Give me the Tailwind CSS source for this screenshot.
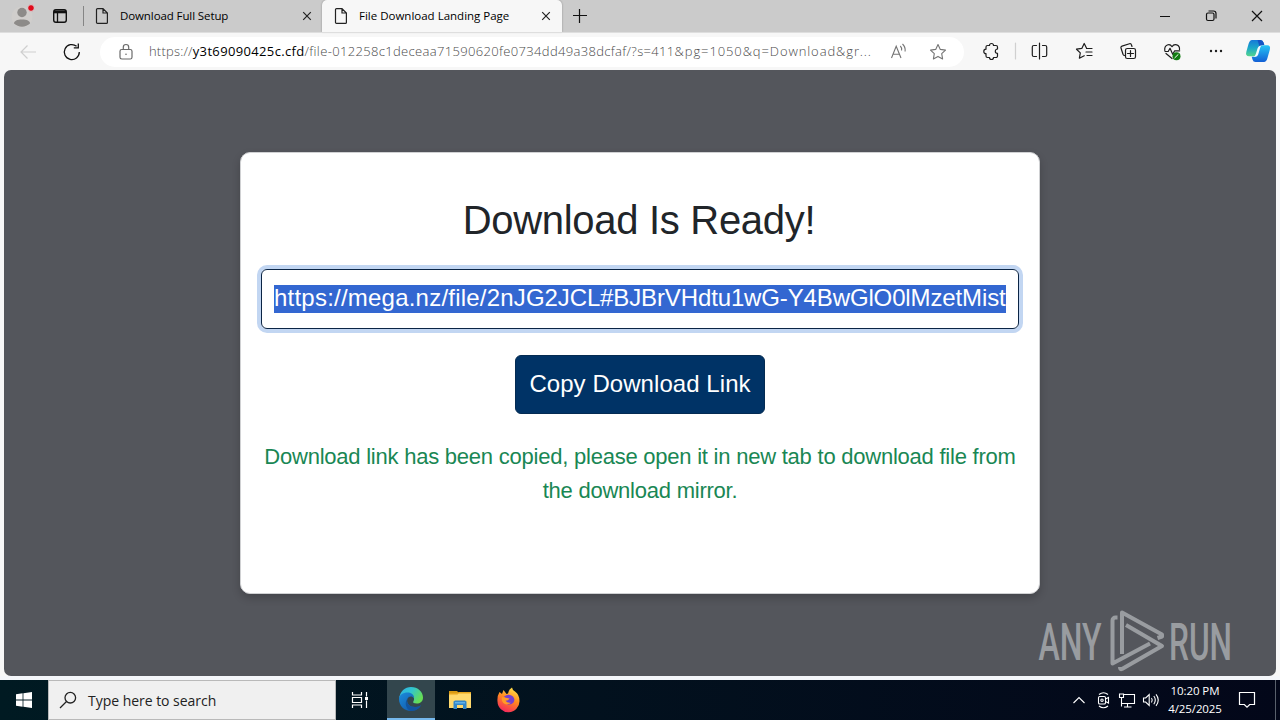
<!DOCTYPE html>
<html lang="en">
<head>
<meta charset="utf-8">
<title>File Download Landing Page</title>
<script src="https://cdn.jsdelivr.net/npm/@tailwindcss/browser@4"></script>
</head>
<body class="w-[1280px] h-[720px] overflow-hidden flex flex-col bg-[#f7f7f7] font-['Open_Sans','Noto_Sans',sans-serif] text-black whitespace-nowrap">

<!-- Tab strip -->
<header class="h-8 shrink-0 flex bg-[#cbcbcb]">
  <div class="w-[83px] h-8 flex items-center">
    <svg class="w-[83px] h-8" viewBox="0 0 83 32" fill="none">
      <circle cx="22" cy="17" r="10.500" fill="#d0cecc"/>
      <circle cx="22" cy="12.500" r="4.700" fill="#8d8b89"/>
      <path d="M14 23.500c0-2.500 3-4 8-4s8 1.500 8 4c-2 2-5 3.200-8 3.200s-6-1.200-8-3.200z" fill="#8d8b89"/>
      <circle cx="31" cy="8" r="3.400" fill="#e00b1c" stroke="#d9d9d9"/>
      <rect x="53.700" y="9.700" width="12.600" height="12.600" rx="2.200" stroke="#111" stroke-width="1.400"/>
      <path d="M54 10.500h12v2.800H54z" fill="#111"/><path d="M57.500 13v9" stroke="#111" stroke-width="1.300"/>
    </svg>
  </div>
  <div class="w-[239px] h-8 flex items-center">
    <div class="w-px h-5 bg-[#858585]"></div>
    <svg class="w-[14px] h-[18px] ml-[11px]" viewBox="0 0 14 18" fill="none" stroke="#222" stroke-width="1.200"><path d="M2.500 1.600H8L12.400 6v9.400a1 1 0 0 1-1 1H2.500a1 1 0 0 1-1-1V2.600a1 1 0 0 1 1-1zM8 1.600V6h4.400"/></svg>
    <span class="ml-[11px] w-[182px] text-[11.500px] tracking-[-0.100px]">Download Full Setup</span>
    <svg class="w-[10px] h-[10px]" viewBox="0 0 10 10" stroke="#222" stroke-width="1.200"><path d="M1.200 1.200l7.600 7.600M8.800 1.200L1.200 8.800"/></svg>
  </div>
  <div class="w-[240px] h-8 flex items-center bg-[#f7f7f7] rounded-t-[5px] shadow-[0_0_2px_rgba(0,0,0,0.35)]">
    <svg class="w-[14px] h-[18px] ml-[12px]" viewBox="0 0 14 18" fill="none" stroke="#222" stroke-width="1.200"><path d="M2.500 1.600H8L12.400 6v9.400a1 1 0 0 1-1 1H2.500a1 1 0 0 1-1-1V2.600a1 1 0 0 1 1-1zM8 1.600V6h4.400"/></svg>
    <span class="ml-[11px] w-[182px] text-[11.500px] tracking-[0px]">File Download Landing Page</span>
    <svg class="w-[10px] h-[10px]" viewBox="0 0 10 10" stroke="#222" stroke-width="1.200"><path d="M1.200 1.200l7.600 7.600M8.800 1.200L1.200 8.800"/></svg>
  </div>
  <svg class="w-[14px] h-[14px] mt-[9px] ml-[11px]" viewBox="0 0 14 14" stroke="#111" stroke-width="1.200"><path d="M0 6.500h14M6.500 0v14"/></svg>
  <svg class="ml-auto w-[140px] h-8" viewBox="1140 0 140 32" fill="none" stroke="#111" stroke-width="1.200">
    <path d="M1160 16.500h10M1252 11l10 10M1262 11l-10 10"/>
    <rect x="1206.500" y="13" width="7.500" height="7.500" rx="1.500"/><path d="M1208.500 11h5q2.500 0 2.500 2.500v5"/>
  </svg>
</header>

<!-- Toolbar -->
<div class="h-[38px] shrink-0 flex items-center border-t border-[#dedede]">
  <svg class="w-[100px] h-[36px]" viewBox="0 33 100 36" fill="none">
    <path d="M36 51H21M27.500 44.500L21 51l6.500 6.500" stroke="#cfcfcf" stroke-width="1.200"/>
    <path d="M79.300 51a7.500 7.500 0 1 1-2.700-5.700" stroke="#111" stroke-width="1.300"/><path d="M78.300 42.500v4.300h-4.500" stroke="#111" stroke-width="1.300"/>
  </svg>
  <div class="w-[864px] h-[30px] rounded-full bg-white flex items-center">
    <svg class="w-[14px] h-[18px] ml-[19px]" viewBox="0 0 14 18" fill="none" stroke="#6a6a6a" stroke-width="1.200"><rect x="1" y="6.500" width="12" height="9.500" rx="1.800"/><path d="M4.300 6.500V4.200a2.700 2.700 0 0 1 5.400 0v2.300"/><circle cx="7" cy="11.200" r=".8" fill="#6a6a6a" stroke="none"/></svg>
    <span class="ml-4 w-[740px] text-[13px] font-light text-[#4a4a4a] tracking-[0.200px]">https://<span class="font-normal text-black tracking-[0.350px]">y3t69090425c.cfd</span><span class="tracking-[0.340px]">/file-012258c1deceaa71590620fe0734dd49a38dcfaf/?s=411</span><span class="tracking-[0.900px]">&amp;pg=1050&amp;q=Download&amp;gr...</span></span>
    <svg class="w-[62px] h-[30px]" viewBox="889 36 62 30" fill="none" stroke="#747474" stroke-width="1.100">
      <path d="M891.500 57l4.700-11.800L901 57M893 53.200h6.500M900.300 45q1.800 1.800 1.300 4.500M902.500 43q3.200 3 2.600 7.500"/>
      <path d="M938 43.600l2.300 4.800 5.200.7-3.800 3.600.9 5.200-4.600-2.500-4.600 2.500.9-5.200-3.800-3.600 5.200-.7z" stroke-linejoin="round"/>
    </svg>
  </div>
  <svg class="w-[316px] h-[37px]" viewBox="964 33 316 37" fill="none" stroke="#1d1d1d" stroke-width="1.200" stroke-linejoin="round" stroke-linecap="round">
    <defs>
      <linearGradient id="cpA" x1="0" y1="0" x2="0" y2="1"><stop offset="0" stop-color="#1579d8"/><stop offset=".5" stop-color="#1ba8c8"/><stop offset="1" stop-color="#55d58d"/></linearGradient>
      <linearGradient id="cpB" x1="0" y1="0" x2="0" y2="1"><stop offset="0" stop-color="#25c5f5"/><stop offset="1" stop-color="#135fd5"/></linearGradient>
    </defs>
    <path d="M987.500 45.500h2a2 2 0 0 1 4 0h2.500a1.500 1.500 0 0 1 1.500 1.500v2a2.200 2.200 0 0 0 0 4.400v2.600a1.500 1.500 0 0 1-1.500 1.500h-2.500a2 2 0 0 1-4 0h-2a1.500 1.500 0 0 1-1.500-1.500v-2.400a2.200 2.200 0 0 1 0-4.400V47a1.500 1.500 0 0 1 1.500-1.500z"/>
    <path d="M1015.500 43v16" stroke="#d0d0d0"/>
    <path d="M1036.500 45.500h-2.700a1.500 1.500 0 0 0-1.500 1.500v8a1.500 1.500 0 0 0 1.500 1.500h2.700M1042.500 45.500h2.700a1.500 1.500 0 0 1 1.500 1.500v8a1.500 1.500 0 0 1-1.500 1.500h-2.700M1039.500 43v16"/>
    <path d="M1090 48.500h-3.300l-2.500-5-2.400 4.900-5.300.8 3.800 3.700-.9 5.300 4.800-2.500M1086.500 48.500h5.500M1086 52h6M1087 55.500h5"/>
    <path d="M1132 46.500l-.6-1.800a1.500 1.500 0 0 0-1.900-1l-7.500 2.400a1.500 1.500 0 0 0-1 1.900l2 6.200q.5 1.300 1.800 1.300"/><rect x="1125.500" y="48.500" width="10" height="10" rx="1.800"/><path d="M1130.500 50.500v6M1127.500 53.500h6"/>
    <path d="M1164.800 50.500c-.8-6 5-7.500 7.200-3.800 2.200-3.700 8-2.200 7.500 2.800M1166 53.500l6 5M1165 51.500h3.200l1.800-3.200 2.700 6 2-3.500h5"/>
    <circle cx="1176.500" cy="56.200" r="4" fill="#107c10" stroke="none"/><path d="M1174.800 57.800l3.300-3.200" stroke="#fff" stroke-width="1"/>
    <g fill="#1d1d1d" stroke="none"><circle cx="1211" cy="51" r="1.200"/><circle cx="1216" cy="51" r="1.200"/><circle cx="1221" cy="51" r="1.200"/></g>
    <g stroke="none">
      <path d="M1252 40h8.500q2.300 0 3 2.500l.8 2.500h-1.500q-2.500 0-3.200 2.500l-1.800 6q-.9 2.700-3.700 2.700h-5q-4 0-2.700-4.800l2.200-7.600q1.100-3.800 3.400-3.800z" fill="url(#cpA)"/>
      <path d="M1264 62h-8.500q-2.300 0-3-2.500l-.8-2.700h2.500q2.500 0 3.200-2.500l1.900-6.500q.8-2.600 3.500-2.600h4.500q3.700 0 2.500 4.600l-2.400 8.400q-1.100 3.800-3.400 3.800z" fill="url(#cpB)"/>
      <path d="M1257.500 40h3q2.300 0 3 2.500l.8 2.500h-1.500q-2.500 0-3.200 2z" fill="#1454c4"/>
      <path d="M1261.500 45.500q-3 0-4 3l-1.700 5.500q-.6 2-2.300 2.700h1.700q2.300 0 3-2.300l1.900-6.500q.5-1.700 1.400-2.400z" fill="#f2fbff"/>
    </g>
  </svg>
</div>

<!-- Page viewport -->
<main class="relative h-[606px] shrink-0 mx-1 rounded-[7px] bg-[#54565c] font-['Liberation_Sans',Arial,sans-serif] flex flex-col items-center">
  <section class="mt-[82px] w-[800px] h-[442px] rounded-[10px] bg-white border border-[#d0d1d3] shadow-[0_4px_8px_rgba(0,0,0,0.2)] flex flex-col items-center">
    <h1 class="mt-[43px] mr-[2px] h-12 leading-[48px] text-[40px] tracking-[-0.300px] text-[#212529]">Download Is Ready!</h1>
    <div class="mt-[25px] w-[758px] h-[60px] rounded-[6px] border border-[#0b2545] ring-4 ring-[#c2d6f2] px-3 flex items-center">
      <div class="w-[732px] h-7 bg-[#3367d1] text-white text-[24px] leading-[26px]"><span class="tracking-[0.220px]">https://mega.nz/file/2nJ</span><span class="tracking-[-0.130px]">G2JCL#BJBrVHdtu1wG-Y4BwGlO0lMzetMist</span></div>
    </div>
    <div class="mt-[26px] w-[250px] h-[59px] pb-[2px] rounded-[6px] bg-[#003366] border border-[#042b52] text-white text-[24px] tracking-[0.060px] flex items-center justify-center">Copy Download Link</div>
    <p class="mt-[26px] w-[766px] text-center whitespace-normal text-[22px] tracking-[-0.230px] leading-[33.600px] text-[#198754]">Download link has been copied, please open it in new tab to download file from the download mirror.</p>
  </section>
  <svg class="absolute left-[1028px] top-[534px] w-[210px] h-[72px]" viewBox="1032 604 210 72" fill="none">
    <g fill="#999ca0" font-family="Roboto" font-weight="500" font-size="51">
      <text transform="translate(1038.500 659.500) scale(.63 1)" textLength="100" lengthAdjust="spacingAndGlyphs">ANY</text>
      <text transform="translate(1169 659.500) scale(.63 1)" textLength="100" lengthAdjust="spacingAndGlyphs">RUN</text>
    </g>
    <g stroke="#999ca0" stroke-width="4" stroke-linejoin="round">
      <path d="M1117.500 617.500h-2a3 3 0 0 0-3 3V663.500l37.500-20"/>
      <path d="M1122 654V612.500l40 22v2l-4.500 1.500"/>
      <path d="M1126 625l36 21-40 23q-2 .8-2-2"/>
    </g>
  </svg>
</main>
<div class="h-1 shrink-0 bg-[#f4f6fa]"></div>

<!-- Taskbar -->
<footer class="h-10 shrink-0 flex bg-linear-to-r from-[#001a22] to-[#030719] text-white">
  <div class="w-12 h-10 flex items-center justify-center">
    <svg class="w-4 h-4" viewBox="0 0 16 16" fill="#fff"><path d="M0 2.200l6.600-.9v6.300H0zM7.400 1.200L16 0v7.600H7.400zM0 8.400h6.600v6.300L0 13.800zM7.400 8.400H16V16l-8.600-1.200z"/></svg>
  </div>
  <div class="w-[288px] h-10 bg-[#f0f0f0] border border-[#b9b9b9] flex items-center text-[#222]">
    <svg class="w-[18px] h-[18px] ml-[10px]" viewBox="0 0 18 18" fill="none" stroke="#222" stroke-width="1.300"><circle cx="11.300" cy="6.700" r="5.300"/><path d="M7.500 10.500L1 17"/></svg>
    <span class="ml-[11px] text-[14px] tracking-[-0.030px]">Type here to search</span>
  </div>
  <svg class="w-[51px] h-10" viewBox="336 680 51 40" fill="none" stroke="#fff" stroke-width="1.200"><path d="M352.500 692v3h9v-3M352.500 708v-3h9v3M352.500 697.500h9v5h-9zM366.500 692v4.500M366.500 700.500v7.500"/><path d="M365 697h3v3h-3z" fill="#fff" stroke="none"/></svg>
  <div class="w-12 h-10 bg-[#33464d] border-b-2 border-[#76b9ed] flex items-center justify-center">
    <svg class="w-6 h-6" viewBox="0 0 24 24">
      <defs>
        <linearGradient id="eA" x1="0" y1="0" x2="1" y2=".5"><stop offset="0" stop-color="#2faee5"/><stop offset=".5" stop-color="#31c5d0"/><stop offset="1" stop-color="#66dd55"/></linearGradient>
        <linearGradient id="eB" x1="0" y1="0" x2="1" y2="1"><stop offset="0" stop-color="#1b8bdc"/><stop offset="1" stop-color="#114f9e"/></linearGradient>
      </defs>
      <path d="M0 12C1 4 6 0 12 0c7 0 12 5 12 10.500 0 4-3 6-6.200 6-2.800 0-4.200-1-3.500-2 1.800-2.500.5-6-3.300-6C5 8.500 0 9 0 12z" fill="url(#eA)"/>
      <path d="M0 12c0-4 4-6.500 8.500-6.500 4.200 0 6.800 2.500 6.500 5.500-2-2.600-6-2-6.800 1.500C7.300 16.500 11 20.500 17 20q3-.2 5-1.700C20 22 16 24 12 24 5 24 0 18.500 0 12z" fill="url(#eB)"/>
      <path d="M8.200 12.500C7.300 16.500 11 20.500 17 20q3-.2 5-1.700C20 22 16 24 12 24 6 22 4.500 13.500 11 8.700q-2.300 1.300-2.800 3.800z" fill="#12549f"/>
    </svg>
  </div>
  <svg class="w-[110px] h-10" viewBox="435 680 110 40">
    <defs>
      <linearGradient id="fx" x1=".7" y1="0" x2=".3" y2="1"><stop offset="0" stop-color="#ffe14a"/><stop offset=".45" stop-color="#ff8a1f"/><stop offset="1" stop-color="#f5245f"/></linearGradient>
    </defs>
    <path d="M449 691h8l2 2h-10z" fill="#d99a12"/>
    <path d="M449 693h22v15h-22z" fill="#ffd566"/><path d="M449 693h8l2-1h12v2.500H449z" fill="#e8a820"/><path d="M458.500 693.500h12.500V708H449v-12.500h8z" fill="#ffd96d"/>
    <path d="M453.500 709v-7.500l1.500-1h10l1.500 1v7.500h-3.500v-4h-6v4z" fill="#3488c9"/><path d="M455 702h10v1.500h-10z" fill="#62b2e8"/>
    <path d="M499.500 692l2.500 2 1.500-4 3 4q2 0 2-2 .5-3 3.500-4.500.5 3 3 4 4.500 3 4.500 9.500a11 11 0 0 1-22 .5q-.5-5.500 2-9.500z" fill="url(#fx)"/>
    <path d="M504 696.500q5-3.500 9 0 2.500 3 .5 6-2 2.500-5.500 2-4-.8-4-4.200l4-1.300q-2.500-.3-4-2.500z" fill="#7440cf"/>
    <path d="M502 697q4 .5 7.500 1.500-1 2.200-4 2.200 2 2.600 5.500 1.800-3 3-6.500 1.300t-2.500-6.800z" fill="#ff9b27"/>
  </svg>
  <svg class="ml-auto w-[100px] h-10" viewBox="1065 680 100 40" fill="none" stroke="#fff" stroke-width="1.100">
    <path d="M1073.500 703l5.500-5.500 5.500 5.500"/>
    <path d="M1099 694.500q4.500-3.500 9 0M1099 706q4.500 3.500 9 0"/><rect x="1098.500" y="696.500" width="7" height="7.500" rx="1.300"/><path d="M1105.500 699l3-1.500v5.500l-3-1.500"/><circle cx="1102" cy="700.200" r="1.200"/>
    <path d="M1124 694.500h10.500v9H1122M1127.500 703.500v3.500M1124 707h7.500M1119.500 694h4v3.500h-4zM1121.500 697.500v9"/>
    <path d="M1143.500 698h2.200l3.500-3.500v11l-3.500-3.500h-2.200zM1151.500 698q1.500 2 0 4.500M1153.800 696q3 4 0 8.300M1156 694.300q4.500 5.500 0 11.500"/>
  </svg>
  <div class="w-[60px] h-10 pt-[2px] text-center text-[11.500px] tracking-[-0.100px] leading-[18px]"><div>10:20 PM</div><div>4/25/2025</div></div>
  <svg class="w-[50px] h-10" viewBox="1225 680 50 40" fill="none" stroke="#fff" stroke-width="1.200"><path d="M1239.500 692.500h15v12h-4.800l-2.700 2.700-2.700-2.700h-4.800z"/></svg>
  <div class="w-[5px] h-10 border-l border-[#59606c]"></div>
</footer>
</body>
</html>
